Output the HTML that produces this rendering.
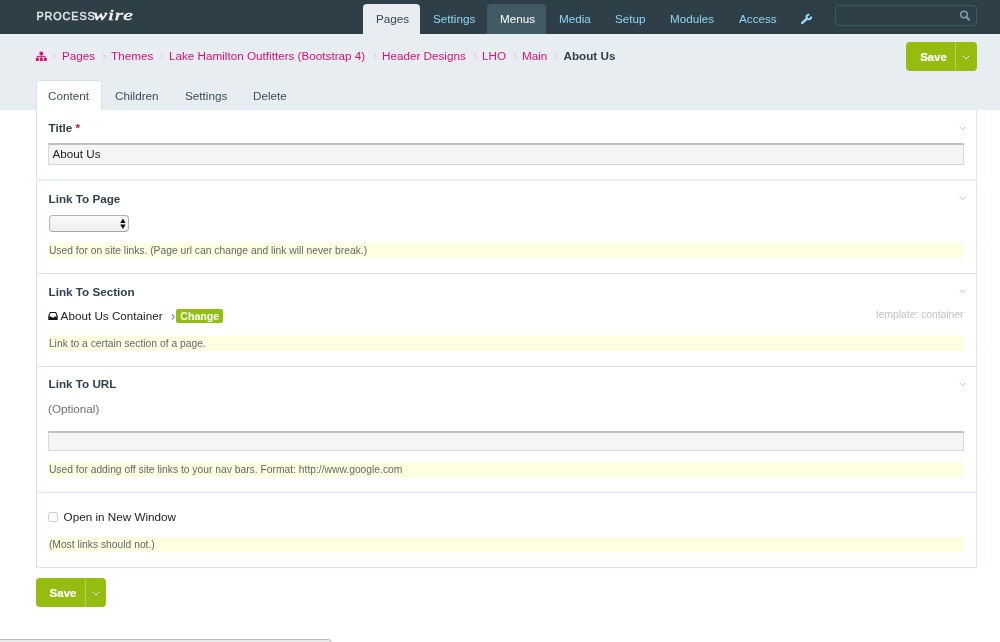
<!DOCTYPE html>
<html><head><meta charset="utf-8">
<style>
*{box-sizing:border-box;margin:0;padding:0}
html,body{width:1000px;height:642px;overflow:hidden;background:#fff}
#wrap{position:absolute;left:0;top:0;width:1000px;height:642px;will-change:transform}
body{position:relative;font-family:"Liberation Sans",sans-serif;font-size:11.7px;color:#354b55}
.a{position:absolute;white-space:nowrap;line-height:12px}
#hdr{position:absolute;left:0;top:0;width:1000px;height:34.3px;background:#2f3f47}
#crumbbar{position:absolute;left:0;top:34px;width:1000px;height:76.4px;background:#e7edf0}
.navtab{position:absolute;top:4px;height:30px;border-radius:4px 4px 0 0}
.nav{color:#8ed6f3;font-size:11.7px}
.bc{color:#dc1173;font-size:11.7px}
.sep{color:#c9b8c3;font-size:11px}
.btn{position:absolute;background:#95bd0f;border-radius:4px}
.btn .dv{position:absolute;top:0;bottom:0;width:1px;background:#b3d25c}
.btn .t{position:absolute;color:#fff;font-weight:bold;font-size:11.4px;line-height:12px;-webkit-text-stroke:0.2px #fff}
.tab{color:#3b4d55;font-size:11.7px}
#panel{position:absolute;left:36px;top:110.4px;width:941px;height:457.6px;border:1px solid #d9e4e9;border-right-color:#e1e8eb;border-top:none;background:#fff}
.hr{position:absolute;left:36px;width:941px;height:1px;background:#dbe5ea}
.lbl{font-weight:bold;color:#2f424c;font-size:11.7px}
.notes{position:absolute;left:48.3px;width:915.7px;background:#fefee1;color:#62676b;font-size:10.3px;line-height:14px;padding-left:0.6px;padding-top:1.3px}
.chev{position:absolute;left:959px;width:7px;height:5px}
.inp{position:absolute;left:48.3px;width:915.7px;background:#f3f5f7;border:1px solid #d6d8d9;border-top:2px solid #bfc1c2}
</style></head><body><div id="wrap">

<div id="hdr"></div>
<div id="crumbbar"></div>

<!-- logo -->
<div class="a" style="left:36.5px;top:10px;font-size:10.8px;font-weight:normal;-webkit-text-stroke:0.45px #e3e7e9;color:#e3e7e9;letter-spacing:0.9px;line-height:12px">PROCESS</div>
<div class="a" style="left:92.5px;top:6.5px;font-family:'Liberation Serif',serif;font-style:italic;font-weight:normal;-webkit-text-stroke:0.5px #f4f6f7;font-size:15px;color:#f4f6f7;line-height:16px;letter-spacing:0.6px;transform:scaleX(1.42);transform-origin:0 0">wire</div>

<!-- nav -->
<div class="navtab" style="left:363px;width:57px;background:#e7edf0"></div>
<div class="navtab" style="left:487.4px;width:58.6px;background:#425a63"></div>
<div class="a nav" style="left:376px;top:13.4px;color:#3a474c">Pages</div>
<div class="a nav" style="left:433px;top:13.4px">Settings</div>
<div class="a nav" style="left:500px;top:13.4px;color:#fff">Menus</div>
<div class="a nav" style="left:559px;top:13.4px">Media</div>
<div class="a nav" style="left:615px;top:13.4px">Setup</div>
<div class="a nav" style="left:670px;top:13.4px">Modules</div>
<div class="a nav" style="left:739px;top:13.4px">Access</div>
<svg class="a" style="left:800px;top:12px" width="13" height="13" viewBox="0 0 13 13"><path d="M2.2 10.9 L6.9 6.8" stroke="#9ddcf6" stroke-width="2.5" stroke-linecap="round"/><path d="M11.02 4.40 A2.3 2.3 0 1 1 9.40 2.78" stroke="#9ddcf6" stroke-width="2" fill="none"/></svg>
<div class="a" style="left:835px;top:5px;width:142px;height:21px;border:1px solid #3f5962;border-radius:4px"></div>
<svg class="a" style="left:959px;top:10px" width="12" height="11" viewBox="0 0 12 11"><circle cx="5" cy="4.5" r="3.3" stroke="#789ea8" stroke-width="1.6" fill="none"/><path d="M7.3 7 L10 9.8" stroke="#789ea8" stroke-width="2" stroke-linecap="round"/></svg>

<!-- breadcrumbs -->
<svg class="a" style="left:35px;top:51px" width="12" height="11" viewBox="0 0 12 11"><g fill="#dc1173"><rect x="4.5" y="0.7" width="3.5" height="3.3" rx="0.4"/><rect x="1.9" y="4.9" width="8.1" height="1"/><rect x="1.8" y="5.5" width="1" height="1.6"/><rect x="5.8" y="3.8" width="1" height="3.3"/><rect x="9.8" y="5.5" width="1" height="1.6"/><rect x="0.8" y="6.9" width="3" height="3.2" rx="0.4"/><rect x="4.8" y="6.9" width="3" height="3.2" rx="0.4"/><rect x="8.8" y="6.9" width="3" height="3.2" rx="0.4"/></g></svg>
<div class="a bc" style="left:62px;top:50px">Pages</div>
<div class="a bc" style="left:111px;top:50px">Themes</div>
<div class="a bc" style="left:169px;top:50px">Lake Hamilton Outfitters (Bootstrap 4)</div>
<div class="a bc" style="left:382px;top:50px">Header Designs</div>
<div class="a bc" style="left:482px;top:50px">LHO</div>
<div class="a bc" style="left:522px;top:50px">Main</div>
<div class="a" style="left:563.5px;top:50px;font-weight:bold;color:#333e44">About Us</div>

<svg class="a" style="left:52.4px;top:53px" width="5" height="7" viewBox="0 0 5 7"><path d="M0.6 0.6 L3.4 3.4 L0.6 6.2" stroke="#edb6d0" stroke-width="1" fill="none"/></svg>
<svg class="a" style="left:101.5px;top:53px" width="5" height="7" viewBox="0 0 5 7"><path d="M0.6 0.6 L3.4 3.4 L0.6 6.2" stroke="#edb6d0" stroke-width="1" fill="none"/></svg>
<svg class="a" style="left:159.7px;top:53px" width="5" height="7" viewBox="0 0 5 7"><path d="M0.6 0.6 L3.4 3.4 L0.6 6.2" stroke="#edb6d0" stroke-width="1" fill="none"/></svg>
<svg class="a" style="left:372.9px;top:53px" width="5" height="7" viewBox="0 0 5 7"><path d="M0.6 0.6 L3.4 3.4 L0.6 6.2" stroke="#edb6d0" stroke-width="1" fill="none"/></svg>
<svg class="a" style="left:472.5px;top:53px" width="5" height="7" viewBox="0 0 5 7"><path d="M0.6 0.6 L3.4 3.4 L0.6 6.2" stroke="#edb6d0" stroke-width="1" fill="none"/></svg>
<svg class="a" style="left:512.5px;top:53px" width="5" height="7" viewBox="0 0 5 7"><path d="M0.6 0.6 L3.4 3.4 L0.6 6.2" stroke="#edb6d0" stroke-width="1" fill="none"/></svg>
<svg class="a" style="left:553.8px;top:53px" width="5" height="7" viewBox="0 0 5 7"><path d="M0.6 0.6 L3.4 3.4 L0.6 6.2" stroke="#edb6d0" stroke-width="1" fill="none"/></svg>

<!-- save top -->
<div class="btn" style="left:906.2px;top:42px;width:70.5px;height:29.4px">
  <div class="dv" style="left:49.2px"></div>
  <div class="t" style="left:14px;top:9px">Save</div>
  <svg style="position:absolute;left:56px;top:13px" width="8" height="5" viewBox="0 0 8 5"><path d="M1 1 L4 4 L7 1" stroke="#fff" stroke-width="1" fill="none"/></svg>
</div>

<!-- tabs -->
<div class="a" style="left:36.3px;top:80px;width:65.6px;height:31px;background:#fff;border-radius:4px 4px 0 0;border:1px solid #d5e3e9;border-bottom:none"></div>
<div class="a tab" style="left:48px;top:89.6px">Content</div>
<div class="a tab" style="left:115px;top:89.6px">Children</div>
<div class="a tab" style="left:185px;top:89.6px">Settings</div>
<div class="a tab" style="left:253px;top:89.6px">Delete</div>

<!-- panel -->
<div id="panel"></div>
<div class="hr" style="top:179px;height:2px;background:#e8eef1"></div>
<div class="hr" style="top:273px"></div>
<div class="hr" style="top:366px"></div>
<div class="hr" style="top:492px"></div>

<!-- section 1 -->
<div class="a lbl" style="left:48.5px;top:122px">Title <span style="color:#c3122f">*</span></div>
<svg class="chev" style="top:126px" viewBox="0 0 7 5"><path d="M0.5 0.5 L3.5 3.5 L6.5 0.5" stroke="#bcc7cc" stroke-width="1" fill="none"/></svg>
<div class="inp" style="top:143px;height:22px"></div>
<div class="a" style="left:52.5px;top:148px;color:#222">About Us</div>

<!-- section 2 -->
<div class="a lbl" style="left:48.5px;top:193px">Link To Page</div>
<svg class="chev" style="top:196px" viewBox="0 0 7 5"><path d="M0.5 0.5 L3.5 3.5 L6.5 0.5" stroke="#bcc7cc" stroke-width="1" fill="none"/></svg>
<div class="a" style="left:48.7px;top:215.2px;width:80.5px;height:16.9px;border:1px solid #b3b3b3;border-bottom-color:#a6a6a6;border-radius:4px;background:linear-gradient(#f9f9f9,#f0f0f0)"></div>
<svg class="a" style="left:120px;top:218px" width="6" height="11" viewBox="0 0 6 11"><path d="M2.9 0.5 L5.6 5 L0.2 5 Z M2.9 11 L5.6 6.4 L0.2 6.4 Z" fill="#111"/></svg>
<div class="notes" style="top:243px;height:15px">Used for on site links. (Page url can change and link will never break.)</div>

<!-- section 3 -->
<div class="a lbl" style="left:48.5px;top:286px">Link To Section</div>
<svg class="chev" style="top:289px" viewBox="0 0 7 5"><path d="M0.5 0.5 L3.5 3.5 L6.5 0.5" stroke="#bcc7cc" stroke-width="1" fill="none"/></svg>
<svg class="a" style="left:48px;top:311.8px" width="10" height="9" viewBox="0 0 10 9"><path d="M1.9 0.1 H8.1 L9.7 3.8 V8.1 H0.3 V3.8 Z" fill="#151515"/><path d="M2.6 1.1 H7.4 L8.7 4.4 H6.6 L6.1 5.6 H3.9 L3.4 4.4 H1.3 Z" fill="#fff"/></svg>
<div class="a" style="left:60.6px;top:310px;color:#222">About Us Container</div>
<svg class="a" style="left:170.5px;top:313.6px" width="5" height="7" viewBox="0 0 5 7"><path d="M0.9 0.5 L3.1 3.05 L0.9 5.6" stroke="#8f8f8f" stroke-width="1.15" fill="none"/></svg>
<div class="a" style="left:176px;top:309px;width:47px;height:14px;background:#93bf12;border-radius:2px"></div>
<div class="a" style="left:180.3px;top:311px;color:#fff;font-weight:bold;font-size:10.6px;line-height:11px">Change</div>
<div class="a" style="left:863.5px;top:308.6px;color:#c2c2c2;font-size:10.3px;width:100px;text-align:right">template: container</div>
<div class="notes" style="top:336px;height:15px">Link to a certain section of a page.</div>

<!-- section 4 -->
<div class="a lbl" style="left:48.5px;top:378px">Link To URL</div>
<svg class="chev" style="top:382px" viewBox="0 0 7 5"><path d="M0.5 0.5 L3.5 3.5 L6.5 0.5" stroke="#bcc7cc" stroke-width="1" fill="none"/></svg>
<div class="a" style="left:48px;top:403px;color:#707070">(Optional)</div>
<div class="inp" style="top:430.8px;height:20.7px"></div>
<div class="notes" style="top:462px;height:15px">Used for adding off site links to your nav bars. Format: http://www.google.com</div>

<!-- section 5 -->
<div class="a" style="left:48px;top:512px;width:9.8px;height:9.6px;border:1px solid #cbcbcb;border-radius:2.5px;background:#fff"></div>
<div class="a" style="left:63.6px;top:510.6px;color:#222">Open in New Window</div>
<div class="notes" style="top:537px;height:15px">(Most links should not.)</div>

<!-- save bottom -->
<div class="btn" style="left:36px;top:578.4px;width:70px;height:29px">
  <div class="dv" style="left:49px"></div>
  <div class="t" style="left:13.6px;top:9px;font-size:11.5px">Save</div>
  <svg style="position:absolute;left:56px;top:13px" width="8" height="5" viewBox="0 0 8 5"><path d="M1 1 L4 4 L7 1" stroke="#fff" stroke-width="1" fill="none"/></svg>
</div>

<!-- bottom bar -->
<div class="a" style="left:-5px;top:639px;width:337px;height:10px;background:#e9e9e9;border:1px solid #bababa;border-radius:0 4px 0 0"></div>

</div></body></html>
